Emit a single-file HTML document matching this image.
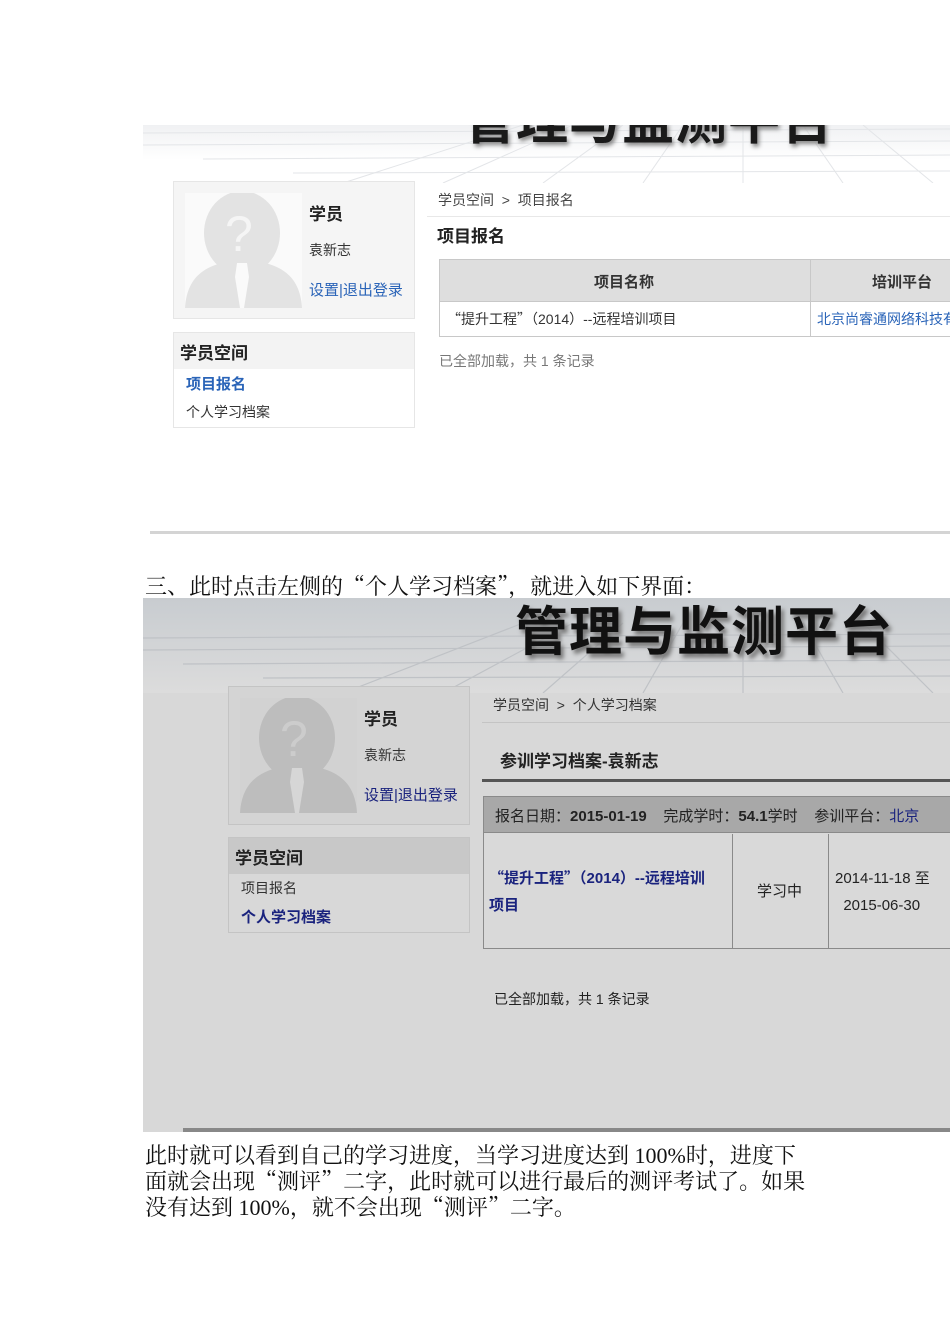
<!DOCTYPE html>
<html><head><meta charset="utf-8">
<style>
*{margin:0;padding:0;box-sizing:border-box}
body{width:950px;height:1344px;background:#fff;position:relative;overflow:hidden;font-family:"Liberation Sans","Noto Sans CJK SC",sans-serif;color:#333}
.a{position:absolute;white-space:nowrap}
.serif{font-family:"Liberation Serif","Noto Serif CJK SC",serif;color:#111;font-size:22px}
.q{font-family:"Noto Serif CJK SC",serif}
.b{font-weight:bold}
.blue{color:#2a64b8}
.navy{color:#1a237e}
</style></head><body>

<!-- Screenshot 1 -->
<div class="a" style="left:143px;top:125px;width:807px;height:58px;overflow:hidden;background:linear-gradient(#f0f1f3,#fff 60%)">
  <svg class="a" style="left:0;top:0" width="807" height="58">
    <g stroke="#e3e5e8" stroke-width="1" fill="none">
      <line x1="0" y1="8" x2="807" y2="4"/><line x1="0" y1="20" x2="807" y2="16"/><line x1="60" y1="34" x2="807" y2="30"/><line x1="150" y1="48" x2="807" y2="46"/>
      <line x1="200" y1="58" x2="380" y2="0"/><line x1="300" y1="58" x2="430" y2="0"/><line x1="400" y1="58" x2="480" y2="0"/><line x1="500" y1="58" x2="540" y2="0"/><line x1="600" y1="58" x2="600" y2="0"/><line x1="700" y1="58" x2="660" y2="0"/><line x1="790" y1="58" x2="720" y2="0"/>
    </g>
  </svg>
  <div class="a b" style="left:320px;top:-46px;font-size:52px;letter-spacing:1px;color:#1a1a1a;text-shadow:2px 3px 4px #888">管理与监测平台</div>
</div>

<div class="a" style="left:173px;top:181px;width:242px;height:138px;background:#f5f5f5;border:1px solid #e6e6e6"></div>
<svg class="a" style="left:185px;top:193px" width="117" height="115">
  <rect width="117" height="115" fill="#fafafa"/>
  <path d="M0 115 C2 80 25 72 45 68 L72 68 C92 72 115 80 117 115Z" fill="#e3e3e3"/>
  <ellipse cx="57" cy="40" rx="38" ry="42" fill="#e3e3e3"/>
  <path d="M52 70 L62 70 L64 84 L59 115 L55 115 L50 84Z" fill="#fafafa"/>
  <text x="40" y="58" font-size="50" font-family="Liberation Sans" fill="#f5f5f5">?</text>
</svg>
<div class="a b" style="left:309px;top:200px;font-size:17px;color:#222">学员</div>
<div class="a" style="left:309px;top:240px;font-size:14px;color:#333">袁新志</div>
<div class="a blue" style="left:309px;top:279px;font-size:15px">设置|退出登录</div>

<div class="a" style="left:173px;top:332px;width:242px;height:96px;background:#fff;border:1px solid #e6e6e6"></div>
<div class="a" style="left:174px;top:333px;width:240px;height:36px;background:#f3f3f3"></div>
<div class="a b" style="left:180px;top:339px;font-size:17px;color:#222">学员空间</div>
<div class="a b blue" style="left:186px;top:373px;font-size:15px">项目报名</div>
<div class="a" style="left:186px;top:402px;font-size:14px;color:#333">个人学习档案</div>

<div class="a" style="left:438px;top:190px;font-size:14px;color:#444">学员空间 &nbsp;&gt;&nbsp; 项目报名</div>
<div class="a" style="left:427px;top:216px;width:523px;height:1px;background:#e8e8e8"></div>
<div class="a b" style="left:437px;top:222px;font-size:17px;color:#222">项目报名</div>

<div class="a" style="left:439px;top:259px;width:520px;height:78px;border:1px solid #c8c8c8;border-right:none;background:#fff"></div>
<div class="a" style="left:440px;top:260px;width:510px;height:42px;background:#dedede;border-bottom:1px solid #c8c8c8"></div>
<div class="a" style="left:810px;top:260px;width:1px;height:76px;background:#c8c8c8"></div>
<div class="a b" style="left:594px;top:271px;font-size:15px;color:#333">项目名称</div>
<div class="a b" style="left:872px;top:271px;font-size:15px;color:#333">培训平台</div>
<div class="a" style="left:447px;top:309px;font-size:14px;color:#333"><span class="q" style="font-family:'Noto Sans CJK SC'">“</span>提升工程<span style="font-family:'Noto Sans CJK SC'">”</span>（2014）--远程培训项目</div>
<div class="a blue" style="left:817px;top:309px;font-size:14px">北京尚睿通网络科技有</div>
<div class="a" style="left:439px;top:351px;font-size:14px;color:#777">已全部加载，共 1 条记录</div>

<div class="a" style="left:150px;top:531px;width:800px;height:3px;background:#d4d4d4"></div>

<div class="a serif" style="left:145px;top:570px">三、此时点击左侧的<span class="q">“</span>个人学习档案<span class="q">”</span>，就进入如下界面：</div>

<!-- Screenshot 2 -->
<div class="a" style="left:143px;top:598px;width:807px;height:534px;overflow:hidden;background:#d8d8d8">
  <div class="a" style="left:0;top:0;width:807px;height:95px;background:linear-gradient(#c8ccd0,#dcdcdc)"></div>
  <svg class="a" style="left:0;top:0" width="807" height="95">
    <g stroke="#bfc2c6" stroke-width="1.2" fill="none">
      <line x1="0" y1="40" x2="807" y2="36"/><line x1="0" y1="52" x2="807" y2="48"/><line x1="40" y1="66" x2="807" y2="62"/><line x1="120" y1="80" x2="807" y2="78"/>
      <line x1="200" y1="95" x2="380" y2="25"/><line x1="300" y1="95" x2="430" y2="25"/><line x1="400" y1="95" x2="480" y2="25"/><line x1="500" y1="95" x2="540" y2="25"/><line x1="600" y1="95" x2="600" y2="25"/><line x1="700" y1="95" x2="660" y2="25"/><line x1="790" y1="95" x2="720" y2="25"/>
    </g>
  </svg>
  <div class="a b" style="left:372px;top:-8px;font-size:53px;letter-spacing:1px;color:#111;text-shadow:3px 4px 4px #777">管理与监测平台</div>
  <div class="a" style="left:40px;top:530px;width:767px;height:4px;background:#888"></div>
</div>

<div class="a" style="left:228px;top:686px;width:242px;height:139px;background:#d4d4d4;border:1px solid #c4c4c4"></div>
<svg class="a" style="left:240px;top:698px" width="117" height="115">
  <rect width="117" height="115" fill="#d2d2d2"/>
  <path d="M0 115 C2 80 25 72 45 68 L72 68 C92 72 115 80 117 115Z" fill="#bdbdbd"/>
  <ellipse cx="57" cy="40" rx="38" ry="42" fill="#bdbdbd"/>
  <path d="M52 70 L62 70 L64 84 L59 115 L55 115 L50 84Z" fill="#d6d6d6"/>
  <text x="40" y="58" font-size="50" font-family="Liberation Sans" fill="#cccccc">?</text>
</svg>
<div class="a b" style="left:364px;top:705px;font-size:17px;color:#222">学员</div>
<div class="a" style="left:364px;top:745px;font-size:14px;color:#333">袁新志</div>
<div class="a navy" style="left:364px;top:784px;font-size:15px">设置|退出登录</div>

<div class="a" style="left:228px;top:837px;width:242px;height:96px;background:#d8d8d8;border:1px solid #c4c4c4"></div>
<div class="a" style="left:229px;top:838px;width:240px;height:36px;background:#c8c8c8"></div>
<div class="a b" style="left:235px;top:844px;font-size:17px;color:#222">学员空间</div>
<div class="a" style="left:241px;top:878px;font-size:14px;color:#333">项目报名</div>
<div class="a b navy" style="left:241px;top:906px;font-size:15px">个人学习档案</div>

<div class="a" style="left:493px;top:695px;font-size:14px;color:#333">学员空间 &nbsp;&gt;&nbsp; 个人学习档案</div>
<div class="a" style="left:482px;top:722px;width:468px;height:1px;background:#c4c4c4"></div>
<div class="a b" style="left:500px;top:747px;font-size:17px;color:#222">参训学习档案-袁新志</div>
<div class="a" style="left:482px;top:779px;width:468px;height:3px;background:#555"></div>

<div class="a" style="left:483px;top:796px;width:480px;height:153px;border:1px solid #8a8a8a;border-right:none;background:#d9d9d9"></div>
<div class="a" style="left:484px;top:797px;width:466px;height:36px;background:#a8a8a8;border-bottom:1px solid #8a8a8a"></div>
<div class="a" style="left:495px;top:805px;font-size:15px;color:#222">报名日期：<b>2015-01-19</b> &nbsp;&nbsp;&nbsp;完成学时：<b>54.1</b>学时 &nbsp;&nbsp;&nbsp;参训平台：<span class="navy">北京</span></div>
<div class="a" style="left:732px;top:834px;width:1px;height:114px;background:#8a8a8a"></div>
<div class="a" style="left:828px;top:834px;width:1px;height:114px;background:#8a8a8a"></div>
<div class="a b navy" style="left:489px;top:864px;font-size:15px;line-height:27px"><span style="font-family:'Noto Sans CJK SC'">“</span>提升工程<span style="font-family:'Noto Sans CJK SC'">”</span>（2014）--远程培训<br>项目</div>
<div class="a" style="left:757px;top:880px;font-size:15px;color:#222">学习中</div>
<div class="a" style="left:835px;top:865px;font-size:15px;color:#222;line-height:27px">2014-11-18 至<br>&nbsp;&nbsp;2015-06-30</div>
<div class="a" style="left:494px;top:989px;font-size:14px;color:#222">已全部加载，共 1 条记录</div>

<div class="a serif" style="left:145px;top:1143px;line-height:25px">此时就可以看到自己的学习进度，当学习进度达到 100%时，进度下<br>面就会出现<span class="q">“</span>测评<span class="q">”</span>二字，此时就可以进行最后的测评考试了。如果<br>没有达到 100%，就不会出现<span class="q">“</span>测评<span class="q">”</span>二字。</div>
</body></html>
